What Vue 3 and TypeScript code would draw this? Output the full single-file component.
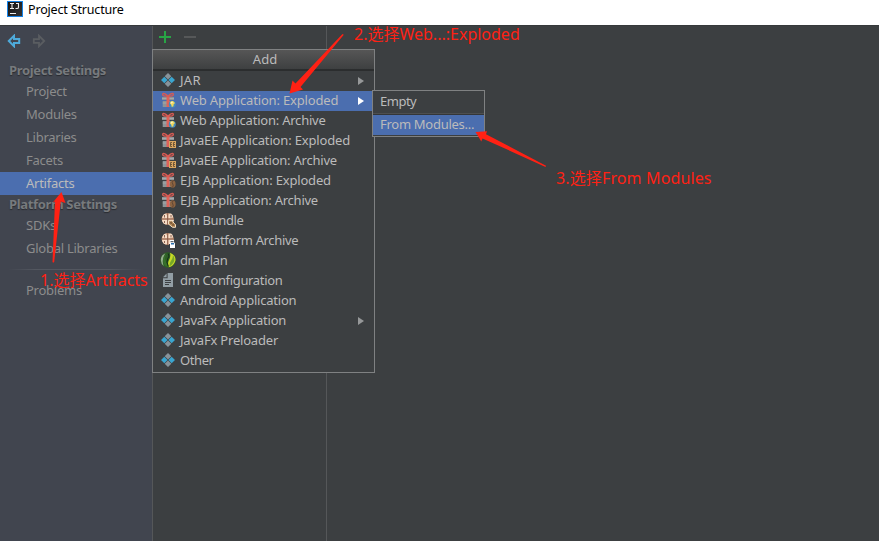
<script setup lang="ts">
interface Entry { label: string; icon: string; badge?: string; sub?: boolean; active?: boolean; spacing: string }

const settings: string[] = ['Project', 'Modules', 'Libraries', 'Facets', 'Artifacts']
const platform: string[] = ['SDKs', 'Global Libraries']
const entries: Entry[] = [
  { label: 'JAR', icon: 'diamond', sub: true, spacing: '0.3px' },
  { label: 'Web Application: Exploded', icon: 'gift', badge: 'web', sub: true, active: true, spacing: '-0.17px' },
  { label: 'Web Application: Archive', icon: 'gift', badge: 'web', spacing: '-0.22px' },
  { label: 'JavaEE Application: Exploded', icon: 'gift', badge: 'ee', spacing: '-0.16px' },
  { label: 'JavaEE Application: Archive', icon: 'gift', badge: 'ee', spacing: '-0.22px' },
  { label: 'EJB Application: Exploded', icon: 'gift', badge: 'bean', spacing: '-0.18px' },
  { label: 'EJB Application: Archive', icon: 'gift', badge: 'bean', spacing: '-0.24px' },
  { label: 'dm Bundle', icon: 'dm', badge: 'nut', spacing: '-0.36px' },
  { label: 'dm Platform Archive', icon: 'dm', badge: 'jar', spacing: '-0.36px' },
  { label: 'dm Plan', icon: 'plan', spacing: '-0.4px' },
  { label: 'dm Configuration', icon: 'file', spacing: '-0.34px' },
  { label: 'Android Application', icon: 'diamond', spacing: '-0.22px' },
  { label: 'JavaFx Application', icon: 'diamond', sub: true, spacing: '-0.23px' },
  { label: 'JavaFx Preloader', icon: 'diamond', spacing: '-0.2px' },
  { label: 'Other', icon: 'diamond', spacing: '-0.4px' },
]
</script>

<template>
  <div class="window">
    <header class="titlebar">
      <svg class="logo" width="16" height="16" viewBox="0 0 16 16">
        <defs><linearGradient id="logo-g" x2="1" y2="1"><stop stop-color="#111" /><stop offset="1" stop-color="#343434" /></linearGradient></defs>
        <rect width="16" height="16" fill="#1683e8" />
        <rect x="1" y="1" width="14" height="14" fill="url(#logo-g)" />
        <path d="M3 2.5h4M5 2.5v5M3 7.5h4M9 2.5h3M11.5 2.5v3.7q0 1.3-1.5 1.3H8.5M3 12.5h6" stroke="#eee" fill="none" stroke-width="1.1" />
      </svg>
      <span>Project Structure</span>
    </header>
    <div class="body">
      <aside class="sidebar">
        <div class="history">
          <svg width="14" height="14" viewBox="0 0 14 14"><path d="M1.8 7 7 1.8v3.3h5.2v3.8H7v3.3Z" fill="none" stroke="#4eaada" stroke-width="2" /></svg>
          <svg width="14" height="14" viewBox="0 0 14 14"><path d="M12.2 7 7 1.8v3.3H1.8v3.8H7v3.3Z" fill="none" stroke="#5a5d61" stroke-width="1.8" /></svg>
        </div>
        <nav>
          <h2>Project Settings</h2>
          <div v-for="item in settings" :key="item" class="nav-row" :class="{ selected: item === 'Artifacts' }">{{ item }}</div>
          <h2>Platform Settings</h2>
          <div v-for="item in platform" :key="item" class="nav-row">{{ item }}</div>
          <div class="rule"></div>
          <div class="nav-row">Problems</div>
        </nav>
      </aside>
      <section class="list">
        <div class="toolbar">
          <svg width="12" height="12" viewBox="0 0 12 12"><path d="M0 6h12M6 0v12" stroke="#28a445" stroke-width="2" /></svg>
          <svg width="12" height="12" viewBox="0 0 12 12"><path d="M0 6h12" stroke="#565859" stroke-width="2" /></svg>
        </div>
      </section>
      <main class="detail"></main>
    </div>

    <div class="menu">
      <div class="menu-title">Add</div>
      <div v-for="entry in entries" :key="entry.label" class="menu-row" :class="{ active: entry.active }">
        <svg class="icon" width="16" height="16" viewBox="0 0 16 16">
          <template v-if="entry.icon === 'diamond'">
            <path d="m8 1 3.3 3.3L8 7.6 4.7 4.3ZM8 8.4l3.3 3.3L8 15l-3.3-3.3Z" fill="#87939a" />
            <path d="m4.3 4.7 3.3 3.3-3.3 3.3L1 8ZM11.7 4.7 15 8l-3.3 3.3L8.4 8Z" fill="#3ba5cf" />
          </template>
          <template v-else-if="entry.icon === 'gift'">
            <path d="M2 5h12v3H2ZM2.7 9h10.6v6H2.7Z" fill="#8d9497" />
            <path d="M2.7 11h10.6M2 6.5h12" stroke="#a9aeaf" stroke-width=".8" />
            <path d="M6.5 4h3v11h-3Z" fill="#df6258" />
            <path d="M8 4Q2.5 4.7 2.6 2.2 3.4.2 8 4 12.6.2 13.4 2.2 13.5 4.7 8 4" fill="none" stroke="#d85b53" stroke-width="1.3" />
          </template>
          <template v-else-if="entry.icon === 'dm'">
            <circle cx="7.7" cy="7" r="6" fill="#d8a988" />
            <path d="M3 3.8Q5-.2 7 3.2v3H2.2ZM8.3 2.5Q12-.3 13 5l-1.7 1.3h-3ZM2 7.7h5V12Q2.8 13 2 7.7ZM8.5 7.7H14Q13 13 8.5 12Z" fill="#f5dcc6" />
            <path d="M7.7 1v12M1.7 7h12M4.5 3v2.5M11 3v2.5M4.5 9v2" stroke="#815644" stroke-width=".9" />
          </template>
          <template v-else-if="entry.icon === 'plan'">
            <circle cx="8" cy="8" r="7.8" fill="#2c5e25" />
            <path d="M5.5 1.2Q1 3 .8 8 1 12 3.8 14 2.2 10.5 3 7.5 3.5 4 5.5 1.2Z" fill="#93ad8e" />
            <path d="M7.5 1Q3.5 6 6 9.5L8 15Q3 14 3 8 3.5 4 7.5 1Z" fill="#37702b" />
            <path d="M10 .8Q16 3 15.5 8.5 14 14 8.7 15.3 7.3 11 9 8 11 4.5 10 .8Z" fill="#c8d928" />
            <path d="M13 3Q15.5 7 13.5 10.5 11.5 13.5 9.4 14.5 9.4 10.5 11.5 8 13 5.5 13 3Z" fill="#78a927" />
            <path d="M8.3 1.5Q10 4 7.6 7 6 10 8.4 14.5" fill="none" stroke="#172d17" stroke-width="1" />
          </template>
          <template v-else>
            <path d="M3 5.3 6.6 1.5v3.8ZM7.6 1H13v14H3V6.3h4.6Z" fill="#929ea4" />
            <path d="M5 8.5h6M5 10.5h6M5 12.5h4" stroke="#3c3f41" stroke-width="1" />
          </template>

          <template v-if="entry.badge === 'web'">
            <circle cx="12.3" cy="12.2" r="3.5" fill="#4389bf" />
            <path d="M10 11q.5-2.5 3-2l2 2-1.5 1.6v1.6l-1.7.7-.5-2Z" fill="#f2d75b" />
            <path d="m11 9.8 2 .2-.8 1.3-1.7.4Z" fill="#fff3c2" />
          </template>
          <template v-else-if="entry.badge === 'ee'">
            <rect x="9" y="9" width="7" height="7" fill="#d9a660" />
            <path d="M12 10.5h-1.5v4H12M10.5 12.5H12M15 10.5h-1.5v4H15M13.5 12.5H15" fill="none" stroke="#5b4630" stroke-width=".8" />
          </template>
          <template v-else-if="entry.badge === 'bean'">
            <ellipse cx="12.7" cy="12" rx="2.9" ry="3.8" fill="#8d6340" />
            <path d="M13.3 8.5q-2 2-.5 3.5 1 1.5-.3 3.4" fill="none" stroke="#493a30" stroke-width=".7" />
          </template>
          <template v-else-if="entry.badge === 'nut'">
            <path d="M8.5 8.7h3.2l3.8 3.8v2.8h-3L8.5 12Z" fill="#b48855" stroke="#f0dfc3" />
            <path d="m10 10 4.5 4M12 9.5 10.5 12M14 11.5 12.5 14" stroke="#694a31" stroke-width=".7" />
          </template>
          <template v-else-if="entry.badge === 'jar'">
            <path d="M10 8h4v2l1.5 2.5V16h-6v-4l.5-2Z" fill="#fff" />
            <path d="M10.5 9.7h3M9.5 12v4M15.5 12v4" stroke="#252d34" stroke-width=".9" />
            <path d="M11 11h3v1.5h-3Z" fill="#2a6fac" />
          </template>
        </svg>
        <span class="menu-label" :style="{ letterSpacing: entry.spacing }">{{ entry.label }}</span>
        <svg v-if="entry.sub" class="chevron" width="6" height="8" viewBox="0 0 6 8"><path d="M0 0 6 4 0 8Z" fill="currentColor" /></svg>
      </div>
    </div>

    <div class="submenu">
      <div class="sub-row empty">Empty</div>
      <div class="sub-rule"></div>
      <div class="sub-row active">From Modules...</div>
    </div>

    <svg class="arrows" width="879" height="541" viewBox="0 0 879 541">
      <g fill="#ff2114">
        <path d="m61.5 192 4 11-4.7-1.5L54.2 262q-1 1.2-1.7 0L55 201.5l-2.2 1Z" />
        <path d="m289.5 93.5 3-13 3 3L342.5 34l1.3.8L300.5 87l2.5 2.5Z" />
        <path d="m475.5 132 11.5-.8-1 3 60 31.5-.5 1.2-63-28.5-1.2 3Z" />
      </g>
    </svg>
    <div class="note first">1.选择Artifacts</div>
    <div class="note second">2.选择Web...:Exploded</div>
    <div class="note third">3.选择From Modules</div>
  </div>
</template>

<style>
body { margin: 0; overflow: hidden; }
</style>

<style scoped>
* { box-sizing: border-box; }
svg { display: block; flex: none; }
.window { position: relative; width: 879px; height: 541px; display: flex; flex-direction: column; overflow: hidden; background: #3c3f41; color: #bbb; font: 13px/20px "Noto Sans", "Noto Sans CJK SC", sans-serif; white-space: nowrap; }
.titlebar { height: 25px; flex: none; display: flex; gap: 5px; padding: 1px 7px; background: #fff; color: #000; font-size: 12.5px; line-height: 18px; letter-spacing: -0.17px; }
.body { display: flex; flex: 1; min-height: 0; border-top: 1px solid #36393b; }
.sidebar { width: 152px; background: #41454f; color: #8c8c8c; }
.history { display: flex; gap: 11px; height: 35px; padding: 8px 7px; }
.nav-row { height: 23px; padding-left: 26px; line-height: 23px; letter-spacing: -0.25px; }
.selected { background: #4b6eaf; color: #bbb; }
h2 { margin: 0; padding-left: 9px; height: 19px; font-size: 13px; line-height: 18px; font-weight: 700; letter-spacing: -0.34px; color: #777a7d; text-shadow: 0 1px 1px #292b30; }
.rule { height: 1px; margin: 9px 8px; background: linear-gradient(90deg, #41454f, #535760 20%, #535760 75%, #41454f); }
.list { width: 175px; border: solid #555759; border-width: 0 1px; }
.toolbar { display: flex; gap: 13px; padding: 5px 6px; }
.menu { position: absolute; left: 152px; top: 49px; width: 223px; height: 324px; border: 1px solid #7f8182; background: #3c3f41; }
.menu-title { height: 21px; padding-left: 3px; text-align: center; line-height: 19px; background: linear-gradient(#565656, #3e4041); border-bottom: 2px solid #2b2d2e; }
.menu-row { display: flex; align-items: center; height: 20px; padding: 0 10px 2px 7px; }
.menu-label { margin-left: 4px; flex: 1; }
.chevron { margin-top: 2px; color: #969899; }
.active { background: #4b6eaf; }
.active .chevron { color: #fff; }
.submenu { position: absolute; left: 372px; top: 90px; width: 113px; height: 47px; padding-bottom: 1px; border: 1px solid #7f8182; background: #3c3f41; }
.sub-row { height: 20px; padding-left: 7px; line-height: 19px; letter-spacing: -0.28px; }
.empty { height: 22px; line-height: 21px; letter-spacing: -0.5px; }
.sub-rule { height: 2px; background: #4d4f50; border-bottom: 1px solid #343638; }
.arrows { position: absolute; inset: 0; pointer-events: none; }
.note { position: absolute; color: #ff2114; font-size: 16px; line-height: 22px; }
.first { left: 40px; top: 269px; }
.second { left: 354px; top: 23px; }
.third { left: 556px; top: 167px; letter-spacing: 0.13px; }
</style>
